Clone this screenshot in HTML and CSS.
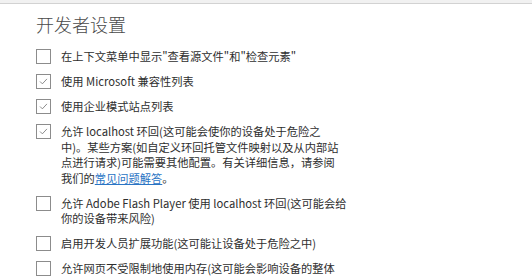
FILE: index.html
```html
<!DOCTYPE html>
<html lang="zh-CN">
<head>
<meta charset="utf-8">
<title>开发者设置</title>
<link rel="stylesheet" href="styles.css">
</head>
<body>
<div class="topbar"></div>
<main class="panel">
  <h1 class="title">开发者设置</h1>
  <ul class="options">
    <li class="option">
      <span class="box"></span>
      <span class="label">在上下文菜单中显示"查看源文件"和"检查元素"</span>
    </li>
    <li class="option">
      <span class="box checked"><svg viewBox="0 0 15 15"><polyline points="3.5,7.5 6.2,10.2 11.5,4.5"/></svg></span>
      <span class="label">使用 Microsoft 兼容性列表</span>
    </li>
    <li class="option">
      <span class="box checked"><svg viewBox="0 0 15 15"><polyline points="3.5,7.5 6.2,10.2 11.5,4.5"/></svg></span>
      <span class="label">使用企业模式站点列表</span>
    </li>
    <li class="option">
      <span class="box checked"><svg viewBox="0 0 15 15"><polyline points="3.5,7.5 6.2,10.2 11.5,4.5"/></svg></span>
      <span class="label">允许 localhost 环回(这可能会使你的设备处于危险之<br>中)。某些方案(如自定义环回托管文件映射以及从内部站<br>点进行请求)可能需要其他配置。有关详细信息，请参阅<br>我们的<a class="link" href="#">常见问题解答</a>。</span>
    </li>
    <li class="option">
      <span class="box"></span>
      <span class="label">允许 Adobe Flash Player 使用 localhost 环回(这可能会给<br>你的设备带来风险)</span>
    </li>
    <li class="option">
      <span class="box"></span>
      <span class="label">启用开发人员扩展功能(这可能让设备处于危险之中)</span>
    </li>
    <li class="option">
      <span class="box"></span>
      <span class="label">允许网页不受限制地使用内存(这可能会影响设备的整体</span>
    </li>
  </ul>
</main>
</body>
</html>
```

FILE: styles.css
```css
html, body {
  margin: 0;
  padding: 0;
  background: #ffffff;
}
body {
  font-family: "Segoe UI", "Noto Sans CJK SC", "Noto Sans", sans-serif;
  color: #2e2e2e;
  overflow: hidden;
}
.topbar {
  height: 3px;
  background: #f1f1f1;
  border-bottom: 1px solid #d2d2d2;
}
.panel {
  padding: 8px 0 0 36px;
}
.title {
  margin: 0 0 13px 0;
  font-size: 18px;
  line-height: 24px;
  font-weight: 300;
  color: #4a4a4a;
}
.options {
  list-style: none;
  margin: 0;
  padding: 0;
  display: flex;
  flex-direction: column;
  gap: 9.5px;
}
.option {
  display: flex;
  align-items: flex-start;
  gap: 10px;
  font-size: 11.25px;
  line-height: 15.5px;
}
.box {
  flex: none;
  box-sizing: border-box;
  width: 15px;
  height: 15px;
  border: 1px solid #8c8c8c;
  background: #fff;
  display: flex;
}
.box svg {
  width: 13px;
  height: 13px;
  fill: none;
  stroke: #7a7a7a;
  stroke-width: 1;
}
.label {
  white-space: nowrap;
}
.link {
  color: #2a74c4;
  text-decoration: underline;
}
```
